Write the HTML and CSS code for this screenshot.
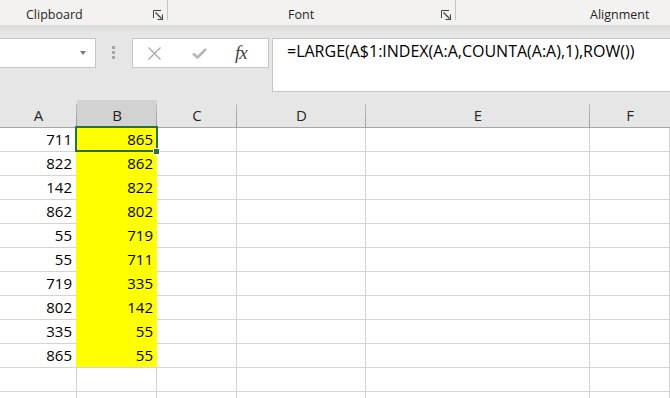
FILE: index.html
```html
<!DOCTYPE html>
<html lang="en">
<head>
    <meta charset="UTF-8">
    <meta name="viewport" content="width=device-width, initial-scale=1.0">
    <title>LARGE sort</title>
    <link rel="stylesheet" href="styles.css">
</head>
<body>
    <div class="ribbon">
        <div class="group clip">
            <span class="label">Clipboard</span>
            <svg class="launcher" width="10" height="10" viewBox="0 0 10 10">
                <path d="M0.5 8V0.5H8" fill="none" stroke="#444" stroke-width="1"/>
                <path d="M2.5 2.5L8.5 8.5" stroke="#444" stroke-width="1.2"/>
                <path d="M4.5 9.5H9.5V4.5" fill="none" stroke="#444" stroke-width="1.2"/>
            </svg>
        </div>
        <div class="group font">
            <span class="label">Font</span>
            <svg class="launcher" width="10" height="10" viewBox="0 0 10 10">
                <path d="M0.5 8V0.5H8" fill="none" stroke="#444" stroke-width="1"/>
                <path d="M2.5 2.5L8.5 8.5" stroke="#444" stroke-width="1.2"/>
                <path d="M4.5 9.5H9.5V4.5" fill="none" stroke="#444" stroke-width="1.2"/>
            </svg>
        </div>
        <div class="group align">
            <span class="label">Alignment</span>
        </div>
    </div>

    <div class="fbar">
        <div class="namebox"><span class="caret"></span></div>
        <div class="grip"><i></i><i></i><i></i></div>
        <div class="fbuttons">
            <svg class="cancel" width="15" height="13" viewBox="0 0 15 13">
                <path d="M1.5 0.5L13.5 12.5M13.5 0.5L1.5 12.5" stroke="#a8a8a8" stroke-width="1.3"/>
            </svg>
            <svg class="enter" width="15" height="11" viewBox="0 0 15 11">
                <path d="M1 5.5L5.5 9.5L14 1" fill="none" stroke="#b5b5b5" stroke-width="2.6"/>
            </svg>
            <span class="fx">fx</span>
        </div>
        <div class="formula">=LARGE(A$1:INDEX(A:A,COUNTA(A:A),1),ROW())</div>
    </div>

    <div class="sheet">
        <div class="row head">
            <div class="cell">A</div>
            <div class="cell active">B</div>
            <div class="cell">C</div>
            <div class="cell">D</div>
            <div class="cell">E</div>
            <div class="cell">F</div>
        </div>
        <div id="rows"></div>
        <div class="sel"></div>
        <div class="handle"></div>
    </div>

    <script>
        const colA = [711, 822, 142, 862, 55, 55, 719, 802, 335, 865];
        const colB = [...colA].sort((a, b) => b - a);
        const rows = document.getElementById('rows');

        for (let i = 0; i < 12; i++) {
            const row = document.createElement('div');
            const filled = i < colA.length;
            row.className = 'row' + (filled ? ' filled' : '') + (i === colA.length - 1 ? ' last' : '');
            row.innerHTML = `
                <div class="cell a">${filled ? colA[i] : ''}</div>
                <div class="cell b">${filled ? colB[i] : ''}</div>
                <div class="cell"></div>
                <div class="cell"></div>
                <div class="cell"></div>
                <div class="cell"></div>
            `;
            rows.appendChild(row);
        }
    </script>
</body>
</html>
```

FILE: styles.css
```css
body {
    margin: 0;
    width: 670px;
    height: 398px;
    overflow: hidden;
    background: #ffffff;
    font-family: 'Open Sans', 'Noto Sans', sans-serif;
    color: #000000;
}

/* ribbon group labels */
.ribbon {
    display: flex;
    height: 25px;
    background: #f3f2f1;
}

.ribbon .group {
    display: flex;
    align-items: flex-start;
    background: linear-gradient(#c8c6c4, #c8c6c4) right top / 1px 20px no-repeat;
}

.ribbon .clip {
    width: 168px;
}

.ribbon .font {
    width: 288px;
}

.ribbon .align {
    flex: 1;
    background: none;
}

.ribbon .label {
    font-size: 12.5px;
    line-height: 16px;
    padding-top: 7px;
    color: #262626;
}

.clip .label {
    margin-left: 26px;
}

.font .label {
    margin-left: 120px;
}

.align .label {
    margin-left: 134px;
}

.launcher {
    margin: 10px 5px 0 auto;
}

/* formula bar */
.fbar {
    display: flex;
    align-items: flex-start;
    height: 75px;
    padding-top: 13px;
    box-sizing: border-box;
    background: linear-gradient(#d9d9d9, #e6e6e6 8px);
}

.namebox {
    width: 96px;
    height: 30px;
    box-sizing: border-box;
    background: #ffffff;
    border: 1px solid #c6c6c6;
    border-left: none;
    display: flex;
    justify-content: flex-end;
    align-items: center;
    padding-right: 9px;
}

.caret {
    width: 0;
    height: 0;
    border-left: 3.5px solid transparent;
    border-right: 3.5px solid transparent;
    border-top: 4px solid #7a7a7a;
}

.grip {
    display: flex;
    flex-direction: column;
    gap: 2px;
    margin-left: 16px;
    padding-top: 8px;
}

.grip i {
    width: 3px;
    height: 3px;
    background: #a6a6a6;
}

.fbuttons {
    display: flex;
    align-items: center;
    width: 137px;
    height: 30px;
    box-sizing: border-box;
    margin-left: 17px;
    padding-left: 14px;
    background: #ffffff;
    border: 1px solid #c6c6c6;
}

.fbuttons .enter {
    margin-left: 30px;
}

.fbuttons .fx {
    margin-left: 28px;
    font-family: 'Liberation Serif', serif;
    font-style: italic;
    font-size: 19px;
    color: #444444;
    letter-spacing: -1px;
}

.formula {
    flex: 1;
    height: 54px;
    box-sizing: border-box;
    margin-left: 3px;
    padding: 1px 0 0 14px;
    background: #ffffff;
    border: 1px solid #c6c6c6;
    border-right: none;
    font-size: 16px;
    line-height: 22px;
    color: #000000;
    white-space: nowrap;
}

/* worksheet grid */
.sheet {
    position: relative;
}

.row {
    display: grid;
    grid-template-columns: 77px 80px 80px 129px 224px 80px;
    height: 24px;
}

.cell {
    border-right: 1px solid #d4d4d4;
    border-bottom: 1px solid #d4d4d4;
    font-size: 15px;
    line-height: 23px;
    text-align: right;
    padding-right: 4px;
    overflow: hidden;
}

.cell.b {
    padding-right: 3px;
}

.row.filled .a {
    border-right-color: #ffff00;
}

.row.filled .b {
    background: #ffff00;
    border-right-color: #ffff00;
    border-bottom-color: #ffff00;
}

.row.filled.last .b {
    border-bottom-color: #d4d4d4;
}

.row.head {
    height: 28px;
    background: #e6e6e6;
}

.row.head .cell {
    border-right: none;
    border-bottom: 1px solid #a6a6a6;
    background: linear-gradient(#bcbcbc, #9c9c9c) right bottom / 1px 23px no-repeat;
    text-align: center;
    padding: 4px 0 0;
    line-height: 23px;
    color: #262626;
}

.row.head .cell.active {
    background-color: #d2d2d2;
    color: #1d1d1d;
}

.row.head .cell:last-child {
    background-image: none;
}

/* active cell selection */
.sel {
    position: absolute;
    left: 75px;
    top: 26px;
    width: 83px;
    height: 26px;
    box-sizing: border-box;
    border: 2px solid #217346;
}

.handle {
    position: absolute;
    left: 153px;
    top: 48px;
    width: 5px;
    height: 5px;
    background: #217346;
    border: 1px solid #ffffff;
}
```
